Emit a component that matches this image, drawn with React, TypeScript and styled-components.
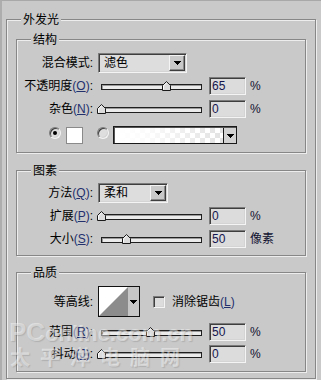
import React from "react";
import styled, { createGlobalStyle, css } from "styled-components";

const BG = "#c9c9c9";
const DARK = "#878787";
const LIGHT = "#ededed";

const GlobalStyle = createGlobalStyle`
  html, body { margin: 0; padding: 0; background: ${BG}; }
  body {
    font-family: "Liberation Sans", "Noto Sans CJK SC", sans-serif;
    font-size: 12px;
    line-height: 14px;
    color: #000;
  }
  * { box-sizing: border-box; }
`;

const sunken = css`
  border-style: solid;
  border-width: 1px;
  border-color: #7b7b7b #f4f4f4 #f4f4f4 #7b7b7b;
  box-shadow: inset 1px 1px 0 #3e3e3e, inset -1px -1px 0 #d4d4d4;
`;

const Frame = styled.div`
  position: relative;
  width: 321px;
  height: 380px;
  overflow: hidden;
  background: ${BG};
  border-top: 1px solid #a8a8a8;
  border-left: 2px solid #adadad;
  padding: 18px 0 0 4px;
`;

const Group = styled.div<{ $w: number; $mt: number; $pb: number; $px: number }>`
  width: ${(p) => p.$w}px;
  margin-top: ${(p) => p.$mt}px;
  padding: 0 ${(p) => p.$px}px ${(p) => p.$pb}px;
  border: 1px solid ${DARK};
  box-shadow: inset 1px 1px 0 ${LIGHT}, 1px 1px 0 ${LIGHT};
`;

const Title = styled.div<{ $ml: number }>`
  width: fit-content;
  height: 14px;
  margin: -7px 0 0 ${(p) => p.$ml}px;
  padding: 0 2px;
  background: ${BG};
  white-space: nowrap;
`;

const Row = styled.div<{ $mt: number; $h: number }>`
  display: flex;
  align-items: center;
  height: ${(p) => p.$h}px;
  margin-top: ${(p) => p.$mt}px;
`;

const Label = styled.div`
  flex: none;
  width: 76px;
  text-align: right;
  white-space: nowrap;
`;

const Key = styled.span`
  color: #23306e;
  u {
    text-decoration-thickness: 1px;
    text-underline-offset: 1px;
  }
`;

const Select = styled.div<{ $w: number }>`
  ${sunken};
  flex: none;
  display: flex;
  width: ${(p) => p.$w}px;
  height: 20px;
  margin-left: 5px;
  padding: 1px;
  background: #dddddd;
`;

const SelectText = styled.span`
  flex: 1;
  padding-left: 4px;
  line-height: 16px;
  white-space: nowrap;
`;

const DropButton = styled.span`
  flex: none;
  width: 16px;
  display: flex;
  align-items: center;
  justify-content: center;
  background: ${BG};
  border-style: solid;
  border-width: 1px;
  border-color: #f4f4f4 #3e3e3e #3e3e3e #f4f4f4;
  box-shadow: inset -1px -1px 0 #8a8a8a;
`;

const Slider = styled.div`
  position: relative;
  flex: none;
  width: 109px;
  height: 18px;
  margin-left: 4px;
  padding: 7px 4px 0;
`;

const Track = styled.div`
  width: 101px;
  height: 6px;
  border: 1px solid #1f1f1f;
  background: #ebebeb;
  box-shadow: inset 1px 1px 0 #9a9a9a;
`;

const ThumbSvg = styled.svg`
  position: absolute;
  top: 4px;
`;

const NumBox = styled.div`
  ${sunken};
  flex: none;
  width: 37px;
  height: 18px;
  margin-left: 3px;
  padding: 1px 0 0 2px;
  background: #dcdcdc;
  color: #15154d;
  line-height: 14px;
`;

const Unit = styled.span`
  margin-left: 4px;
  color: #111130;
  white-space: nowrap;
`;

const Radio = styled.span<{ $on?: boolean; $ml: number }>`
  flex: none;
  align-self: flex-start;
  margin-top: 1px;
  margin-left: ${(p) => p.$ml}px;
  width: 12px;
  height: 12px;
  border-radius: 50%;
  border: 1px solid;
  border-color: #7b7b7b #f4f4f4 #f4f4f4 #7b7b7b;
  box-shadow: inset 1px 1px 0 #3e3e3e, inset -1px -1px 0 #d4d4d4;
  background: #dedede;
  display: flex;
  align-items: center;
  justify-content: center;
  &::after {
    content: "";
    display: ${(p) => (p.$on ? "block" : "none")};
    width: 4px;
    height: 4px;
    border-radius: 50%;
    background: #000;
  }
`;

const ColorSwatch = styled.span`
  flex: none;
  width: 17px;
  height: 17px;
  margin-left: 5px;
  border: 1px solid #8a8a8a;
  background: #ffffff;
`;

const GradientBox = styled.div`
  flex: none;
  display: flex;
  width: 124px;
  height: 18px;
  margin-left: 4px;
  border: 1px solid #1a1a1a;
  box-shadow: inset 1px 1px 0 #555555;
  padding: 1px 0 0 1px;
`;

const GradientFill = styled.div`
  flex: 1;
  background: linear-gradient(
      to right,
      #ffffff 0%,
      rgba(255, 255, 255, 0.85) 30%,
      rgba(255, 255, 255, 0) 100%
    ),
    repeating-conic-gradient(#e2e2e2 0 25%, #ffffff 0 50%) 0 0 / 10px 10px;
`;

const GradientButton = styled.div`
  flex: none;
  width: 13px;
  border-left: 1px solid #1a1a1a;
  background: #d2d2d2;
  display: flex;
  align-items: center;
  justify-content: center;
`;

const Contour = styled.div`
  flex: none;
  display: flex;
  width: 42px;
  height: 31px;
  margin-left: 5px;
  border: 1px solid #111111;
`;

const ContourButton = styled.div`
  flex: none;
  width: 11px;
  background: #c6c6c6;
  display: flex;
  align-items: center;
  justify-content: center;
`;

const CheckBox = styled.span`
  ${sunken};
  flex: none;
  width: 12px;
  height: 12px;
  margin-left: 13px;
  background: #dcdcdc;
`;

const CheckText = styled.span`
  margin-left: 7px;
  white-space: nowrap;
`;

const Watermark = styled.div`
  position: absolute;
  left: 5px;
  top: 317px;
  pointer-events: none;
  color: rgba(255, 255, 255, 0.45);
  text-shadow: 1px 1px 1px rgba(80, 80, 80, 0.2);
`;

const WmLine1 = styled.div`
  height: 28px;
  line-height: 28px;
  padding-left: 2px;
  font-family: "Liberation Sans", sans-serif;
  font-weight: bold;
  white-space: nowrap;
`;

const WmBig = styled.span`
  font-size: 26px;
`;

const WmSmall = styled.span`
  font-size: 22px;
`;

const WmLine2 = styled.div`
  height: 22px;
  line-height: 22px;
  padding-left: 3px;
  font-family: "Noto Sans CJK SC", sans-serif;
  font-size: 20px;
  font-weight: bold;
  letter-spacing: 10px;
  white-space: nowrap;
`;

const DownArrow = () => (
  <svg width="7" height="4" viewBox="0 0 7 4">
    <path d="M0 0h7v1H0zM1 1h5v1H1zM2 2h3v1H2zM3 3h1v1H3z" fill="#000" />
  </svg>
);

const Thumb = ({ pos }: { pos: number }) => (
  <ThumbSvg width="9" height="10" viewBox="0 0 9 10" style={{ left: `${pos}px` }}>
    <path d="M0.5 9.5V4.5L4.5 0.5L8.5 4.5V9.5Z" fill="#dcdcdc" stroke="#1a1a1a" />
    <path d="M1.5 8.5V4.9L4.5 1.9" fill="none" stroke="#ffffff" />
  </ThumbSvg>
);

type SliderRowProps = {
  mt: number;
  label: string;
  k: string;
  value: number;
  pos: number;
  unit: string;
};

const SliderRow = ({ mt, label, k, value, pos, unit }: SliderRowProps) => (
  <Row $mt={mt} $h={18}>
    <Label>
      {label}
      <Key>
        (<u>{k}</u>)
      </Key>
      :
    </Label>
    <Slider>
      <Track />
      <Thumb pos={pos} />
    </Slider>
    <NumBox>{value}</NumBox>
    <Unit>{unit}</Unit>
  </Row>
);

export default function App() {
  return (
    <>
      <GlobalStyle />
      <Frame>
        <Group $w={310} $mt={0} $pb={6} $px={9}>
          <Title $ml={5}>外发光</Title>

          <Group $w={290} $mt={12} $pb={8} $px={0}>
            <Title $ml={14}>结构</Title>
            <Row $mt={6} $h={20}>
              <Label>混合模式:</Label>
              <Select $w={89}>
                <SelectText>滤色</SelectText>
                <DropButton>
                  <DownArrow />
                </DropButton>
              </Select>
            </Row>
            <SliderRow mt={4} label="不透明度" k="O" value={65} pos={65} unit="%" />
            <SliderRow mt={5} label="杂色" k="N" value={0} pos={0} unit="%" />
            <Row $mt={8} $h={18}>
              <Radio $on $ml={32} />
              <ColorSwatch />
              <Radio $ml={14} />
              <GradientBox>
                <GradientFill />
                <GradientButton>
                  <DownArrow />
                </GradientButton>
              </GradientBox>
            </Row>
          </Group>

          <Group $w={290} $mt={17} $pb={7} $px={0}>
            <Title $ml={14}>图素</Title>
            <Row $mt={5} $h={20}>
              <Label>
                方法
                <Key>
                  (<u>Q</u>)
                </Key>
                :
              </Label>
              <Select $w={70}>
                <SelectText>柔和</SelectText>
                <DropButton>
                  <DownArrow />
                </DropButton>
              </Select>
            </Row>
            <SliderRow mt={4} label="扩展" k="P" value={0} pos={0} unit="%" />
            <SliderRow mt={5} label="大小" k="S" value={50} pos={25} unit="像素" />
          </Group>

          <Group $w={290} $mt={16} $pb={8} $px={0}>
            <Title $ml={14}>品质</Title>
            <Row $mt={6} $h={31}>
              <Label>等高线:</Label>
              <Contour>
                <svg width="29" height="29" viewBox="0 0 29 29">
                  <rect width="29" height="29" fill="#ffffff" />
                  <path d="M0 29L29 0V29Z" fill="#8c8c8c" />
                </svg>
                <ContourButton>
                  <DownArrow />
                </ContourButton>
              </Contour>
              <CheckBox />
              <CheckText>
                消除锯齿
                <Key>
                  (<u>L</u>)
                </Key>
              </CheckText>
            </Row>
            <SliderRow mt={6} label="范围" k="R" value={50} pos={49} unit="%" />
            <SliderRow mt={4} label="抖动" k="J" value={0} pos={0} unit="%" />
          </Group>
        </Group>

        <Watermark>
          <WmLine1>
            <WmBig>PC</WmBig>
            <WmSmall>online.com.cn</WmSmall>
          </WmLine1>
          <WmLine2>太平洋电脑网</WmLine2>
        </Watermark>
      </Frame>
    </>
  );
}
